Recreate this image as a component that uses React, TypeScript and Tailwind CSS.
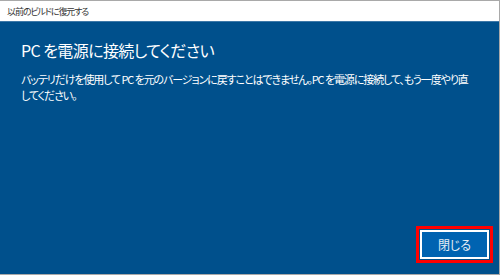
import React from "react";

const jp = "font-['Noto_Sans_CJK_JP','Noto_Sans',sans-serif] [font-feature-settings:'palt']";

const App = () => {
  return (
    <div className={`w-[500px] h-[275px] flex flex-col bg-[#00508c] border-t border-r border-b border-[#a9a9a9] ${jp}`}>
      {/* Title bar */}
      <div className="h-[21px] shrink-0 bg-white flex items-center pl-[7px] border-b border-[#3d78a8]">
        <span className="text-[9px] text-[#333333] leading-none tracking-[-1.1px]">以前のビルドに復元する</span>
      </div>

      {/* Content */}
      <div className="flex-1 flex flex-col px-[21px] pt-[17px] pb-[11px] text-white">
        <h1 className="text-[16px] leading-[22px] font-normal tracking-[-0.6px]">PC を電源に接続してください</h1>
        <p className="mt-[10px] text-[11px] leading-[16px] tracking-[-1.1px] whitespace-nowrap">
          バッテリだけを使用して PC を元のバージョンに戻すことはできません。PC を電源に接続して、もう一度やり直
          <br />
          してください。
        </p>

        <div className="mt-auto flex justify-end mr-[-15px]">
          <div className="border-[3px] border-[#ff0000] p-[1px]">
            <button className="w-[69px] h-[29px] bg-[#0063b1] border-2 border-white text-[12px] text-[#e8eef5] flex items-center justify-center leading-none">
              閉じる
            </button>
          </div>
        </div>
      </div>
    </div>
  );
};

export default App;
